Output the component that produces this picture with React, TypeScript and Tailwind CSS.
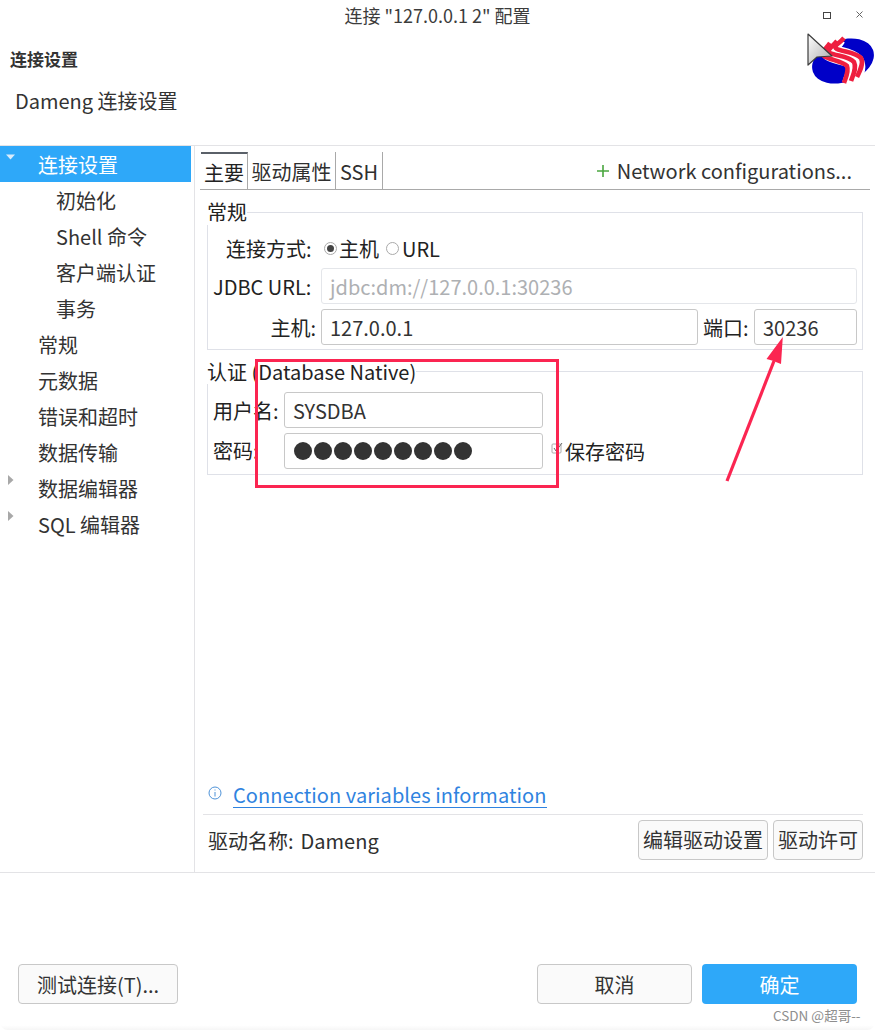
import React from "react";

const FONT = '"Noto Sans CJK SC", "Noto Sans", sans-serif';

const treeItems = [
  { name: "连接设置", depth: 0, arrow: "open", active: true },
  { name: "初始化", depth: 1 },
  { name: "Shell 命令", depth: 1 },
  { name: "客户端认证", depth: 1 },
  { name: "事务", depth: 1 },
  { name: "常规", depth: 0 },
  { name: "元数据", depth: 0 },
  { name: "错误和超时", depth: 0 },
  { name: "数据传输", depth: 0 },
  { name: "数据编辑器", depth: 0, arrow: "closed" },
  { name: "SQL 编辑器", depth: 0, arrow: "closed" },
];

function TreeRow({ item }: { item: (typeof treeItems)[number] }) {
  return (
    <div className={`flex h-9 w-[191px] items-center ${item.active ? "bg-[#2ea8f9] text-white" : "text-[#333]"}`}>
      <div className="h-full w-[38px] shrink-0">
        {item.arrow === "open" && (
          <svg width="16" height="16" viewBox="0 0 16 16" className="ml-[2px] mt-[4px]">
            <path d="M4 4.5h9L8.5 9.5z" fill="#d9ecfb" />
          </svg>
        )}
        {item.arrow === "closed" && (
          <svg width="16" height="16" viewBox="0 0 16 16" className="ml-[3px] mt-[1px]">
            <path d="M5 4l5.5 5L5 14z" fill="#a8a8a8" />
          </svg>
        )}
      </div>
      <span className={`pt-[2px] ${item.depth ? "ml-[18px]" : ""}`}>{item.name}</span>
    </div>
  );
}

function Field({ value, className, muted }: { value: string; className: string; muted?: boolean }) {
  return (
    <div
      className={`flex h-9 items-center rounded-[3px] border pl-[8px] pt-[2px] ${
        muted ? "border-[#e4e6ea] text-[#aeb0b3]" : "border-[#c8c8c8] text-[#333]"
      } ${className}`}
    >
      {value}
    </div>
  );
}

function Logo() {
  return (
    <svg width="75" height="65" viewBox="800 25 75 65" className="absolute left-[800px] top-[25px]">
      <defs>
        <linearGradient id="cur" x1="0" y1="0" x2="1" y2="1">
          <stop offset="0" stopColor="#ffffff" />
          <stop offset="1" stopColor="#a9a9a9" />
        </linearGradient>
      </defs>
      <ellipse cx="843" cy="61" rx="32" ry="21" transform="rotate(-20 843 61)" fill="#0000c8" />
      <path d="M837 38C833 45 826 49 830 52C836 56 849 56 855 62C859 68 853 76 851 84" fill="none" stroke="#fff" strokeWidth="18" />
      <path d="M830 43C825 50 820 53 824 56C830 60 842 61 847 66C849 71 846 77 844 83" fill="none" stroke="#ee1f3f" strokeWidth="4.6" />
      <path d="M837 41C832 47 826 50 830 53C836 56 849 56 854 62C857 68 853 75 851 81" fill="none" stroke="#ee1f3f" strokeWidth="4.6" />
      <path d="M844 38C839 44 832 46 837 49C843 52 855 52 861 58C864 63 860 71 857 77" fill="none" stroke="#ee1f3f" strokeWidth="4.6" />
      <path d="M808 34L832 56L817 57L808 65z" fill="url(#cur)" stroke="#3c3c3c" strokeWidth="1.2" strokeLinejoin="round" />
    </svg>
  );
}

export default function App() {
  return (
    <div
      className="relative flex h-[1030px] w-[875px] flex-col overflow-hidden rounded-[8px] bg-white text-[20px] leading-[26px] text-[#2f2f2f]"
      style={{ fontFamily: FONT }}
    >
      {/* title bar */}
      <div className="relative flex h-8 shrink-0 items-center justify-center pb-[2px] text-[18px] text-[#3c3c3c]">
        连接 "127.0.0.1 2" 配置
        <div className="absolute right-[44px] top-[12px] h-[7px] w-[8px] border border-[#444]" />
        <svg width="10" height="10" viewBox="0 0 10 10" className="absolute right-[10px] top-[10px]">
          <path d="M1.5 1.5l6 6M7.5 1.5l-6 6" stroke="#666" strokeWidth="1" />
        </svg>
      </div>

      {/* header */}
      <div className="h-[114px] shrink-0 border-b border-[#e3e3e6] pl-[10px]">
        <div className="mt-[14px] text-[17px] font-bold text-[#333]">连接设置</div>
        <div className="ml-[5px] mt-[16px] text-[#333]">Dameng 连接设置</div>
      </div>

      {/* body */}
      <div className="flex h-[727px] shrink-0 border-b border-[#e3e3e6]">
        <div className="w-[195px] shrink-0 border-r border-[#e3e3e6]">
          {treeItems.map((item) => (
            <TreeRow key={item.name} item={item} />
          ))}
        </div>

        <div className="flex min-w-0 flex-1 flex-col pl-[5px] pr-[5px] pt-[6px]">
          {/* tabs */}
          <div className="flex h-[38px] w-[670px] shrink-0 items-stretch border-b border-[#a9a9a9] pl-px">
            <div className="flex w-[47px] items-center justify-center border-r border-t-2 border-r-[#a9a9a9] border-t-[#5a6068] pt-[2px] text-[#222]">主要</div>
            <div className="flex w-[88px] items-center justify-center border-r border-[#a9a9a9] pt-[2px]">驱动属性</div>
            <div className="flex w-[47px] items-center justify-center border-r border-[#a9a9a9] pt-[2px]">SSH</div>
            <div className="ml-auto mr-[18px] flex items-center text-[#333]">
              <svg width="14" height="14" viewBox="0 0 14 14" className="mr-[8px]">
                <path d="M7 1v12M1 7h12" stroke="#4aa63f" strokeWidth="1.6" />
              </svg>
              <span className="-ml-px">Network configurations...</span>
            </div>
          </div>

          {/* general group */}
          <fieldset className="ml-[7px] mt-[9px] w-[656px] border border-[#dfe1e8]">
            <legend className="-ml-px h-[26px] text-[#222]">常规</legend>
            <div className="flex h-[42px] items-center pt-[6px] text-[#222]">
              <span className="ml-[18px] w-[86px]">连接方式:</span>
              <span className="mb-[2px] ml-[12px] flex h-[13px] w-[13px] items-center justify-center rounded-full border border-[#aaa]">
                <span className="h-[7px] w-[7px] rounded-full bg-[#444]" />
              </span>
              <span className="ml-[2px]">主机</span>
              <span className="mb-[2px] ml-[7px] h-[13px] w-[13px] rounded-full border border-[#aaa]" />
              <span className="ml-[3px]">URL</span>
            </div>
            <div className="mt-[1px] flex items-center text-[#222]">
              <span className="ml-[5px] w-[108px] pt-[2px]">JDBC URL:</span>
              <Field value="jdbc:dm://127.0.0.1:30236" muted className="w-[536px]" />
            </div>
            <div className="mb-[4px] mt-[5px] flex items-center text-[#222]">
              <span className="w-[113px] pr-[5px] pt-[2px] text-right">主机:</span>
              <Field value="127.0.0.1" className="w-[377px]" />
              <span className="ml-[5px] w-[51px] pt-[2px]">端口:</span>
              <Field value="30236" className="w-[103px]" />
            </div>
          </fieldset>

          {/* auth group */}
          <fieldset className="ml-[7px] mt-[8px] h-[117px] w-[656px] border border-[#dfe1e8]">
            <legend className="-ml-px h-[26px] pt-px text-[#222]">认证 (Database Native)</legend>
            <div className="mt-[8px] flex items-center text-[#222]">
              <span className="ml-[5px] w-[71px] pt-[2px]">用户名:</span>
              <Field value="SYSDBA" className="w-[259px]" />
            </div>
            <div className="mt-[5px] flex items-center text-[#222]">
              <span className="ml-[5px] w-[71px]">密码:</span>
              <div className="flex h-9 w-[259px] items-center gap-[2px] rounded-[3px] border border-[#c8c8c8] pl-[9px]">
                {[0, 1, 2, 3, 4, 5, 6, 7, 8].map((n) => (
                  <span key={n} className="h-[18px] w-[18px] rounded-full bg-[#333]" />
                ))}
              </div>
              <svg width="13" height="13" viewBox="0 0 13 13" className="mb-[5px] ml-[8px]">
                <rect x="1" y="2" width="9" height="9" rx="1" fill="none" stroke="#aaa" />
                <path d="M3 6l2 3 6-8" fill="none" stroke="#666" strokeWidth="1" />
              </svg>
              <span className="ml-px pt-[2px]">保存密码</span>
            </div>
          </fieldset>

          {/* footer of the panel */}
          <div className="mt-auto flex h-[28px] items-center pl-[8px]">
            <svg width="14" height="14" viewBox="0 0 14 14" className="mb-[4px]">
              <circle cx="7" cy="7" r="6" fill="none" stroke="#4f93d8" />
              <path d="M7 3.5v1M7 6v4.5" stroke="#4f93d8" />
            </svg>
            <span className="ml-[11px] border-b border-[#2f83e0] leading-[24px] tracking-[0.06px] text-[#2f83e0]">Connection variables information</span>
          </div>
          <div className="ml-[3px] mr-[7px] mt-[5px] flex h-[58px] items-start border-t border-[#e3e3e6] pl-[5px] pt-[5px]">
            <span className="mt-[8px]">驱动名称:</span>
            <span className="ml-[7px] mt-[8px]">Dameng</span>
            <div className="ml-auto flex gap-[5px]">
              <button className="h-10 w-[130px] rounded-[4px] border border-[#c8c8c8] bg-[#fafafa] text-[#333]">编辑驱动设置</button>
              <button className="h-10 w-[90px] rounded-[4px] border border-[#c8c8c8] bg-[#fafafa] text-[#333]">驱动许可</button>
            </div>
          </div>
        </div>
      </div>

      {/* dialog buttons */}
      <div className="flex flex-1 items-start bg-gradient-to-b from-white from-[97%] to-[#f6f6f6] pl-[18px] pr-[18px] pt-[91px]">
        <button className="h-10 w-40 rounded-[4px] border border-[#c8c8c8] bg-[#fafafa] pt-[2px] text-[#333]">测试连接(T)...</button>
        <button className="ml-auto h-10 w-[155px] rounded-[4px] border border-[#c8c8c8] bg-[#fafafa] pt-[2px] text-[#333]">取消</button>
        <button className="ml-[10px] h-10 w-[155px] rounded-[4px] bg-[#2ea8f9] pt-[2px] text-white">确定</button>
      </div>

      <Logo />

      {/* annotation drawn on top of the screenshot */}
      <div className="absolute left-[255px] top-[359px] h-[129px] w-[304px] border-[3px] border-[#fb2551]" />
      <svg width="80" height="160" viewBox="720 330 80 160" className="absolute left-[720px] top-[330px]">
        <path d="M727 481L774 361" stroke="#fb2551" strokeWidth="3.2" />
        <path d="M782.8 337L781 364L772 360.5L766.5 359z" fill="#fb2551" />
      </svg>

      <div className="absolute left-[773px] top-[1006px] text-[13.5px] leading-[18px] text-[#8e8e8e]">CSDN @超哥--</div>
    </div>
  );
}
